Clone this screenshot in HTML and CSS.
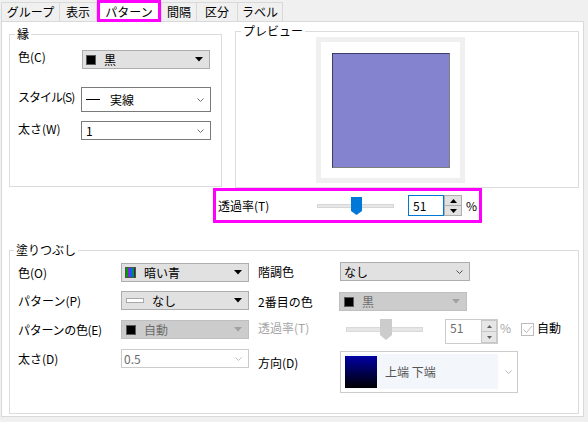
FILE: index.html
```html
<!DOCTYPE html>
<html lang="ja">
<head>
<meta charset="utf-8">
<link rel="stylesheet" href="styles.css">
</head>
<body>
<div class="tabs">
  <div class="tab t1">グループ</div>
  <div class="tab t2">表示</div>
  <div class="tab sel">パターン</div>
  <div class="tab t4">間隔</div>
  <div class="tab t5">区分</div>
  <div class="tab t6">ラベル</div>
</div>
<div class="panel">
  <div class="top">
    <div class="group g-border">
      <span class="legend">縁</span>
      <div class="brow br1">
        <span class="lbl bl1">色(C)</span>
        <div class="cb btn bc1">
          <span class="sq"></span><span class="cbt">黒</span>
          <svg class="tri" width="8" height="5" viewBox="0 0 8 5"><path d="M0 0H8L4 4.5Z" fill="#000"/></svg>
        </div>
      </div>
      <div class="brow br2">
        <span class="lbl bl2">スタイル(S)</span>
        <div class="cb edit bc2">
          <span class="ln"></span><span class="cbt t-style">実線</span>
          <svg class="chev" width="7" height="4" viewBox="0 0 7 4"><path d="M0.5 0.5L3.5 3.5L6.5 0.5" fill="none" stroke="#707070"/></svg>
        </div>
      </div>
      <div class="brow br3">
        <span class="lbl bl3">太さ(W)</span>
        <div class="cb edit bc3">
          <span class="cbt t-one">1</span>
          <svg class="chev" width="7" height="4" viewBox="0 0 7 4"><path d="M0.5 0.5L3.5 3.5L6.5 0.5" fill="none" stroke="#707070"/></svg>
        </div>
      </div>
    </div>
    <div class="group g-preview">
      <span class="legend">プレビュー</span>
      <div class="frame"><div class="swatch"></div></div>
    </div>
  </div>

  <div class="trans">
    <span class="t-label">透過率(T)</span>
    <div class="slider">
      <div class="track"></div>
      <svg class="thumb" width="11" height="18" viewBox="0 0 11 18"><path d="M0 0H11V14L5.5 18L0 14Z" fill="#0078d7"/></svg>
    </div>
    <div class="num focus">51</div>
    <div class="spin">
      <div class="sb"><svg width="7" height="4" viewBox="0 0 7 4"><path d="M3.5 0L7 4H0Z" fill="#000"/></svg></div>
      <div class="sb sb2"><svg width="7" height="4" viewBox="0 0 7 4"><path d="M0 0H7L3.5 4Z" fill="#000"/></svg></div>
    </div>
    <span class="pct">%</span>
  </div>

  <div class="group g-fill">
    <span class="legend lg-fill">塗りつぶし</span>
    <div class="fill-body">
      <div class="fcol left">
        <div class="frow">
          <span class="lbl lw">色(O)</span>
          <div class="cb btn fw">
            <svg class="bars" width="11" height="11" viewBox="0 0 11 11">
              <rect x="0.5" y="0.5" width="10" height="10" fill="#fff" stroke="#505050"/>
              <rect x="1" y="1" width="2" height="9" fill="#00a000"/>
              <rect x="3" y="1" width="2" height="9" fill="#7030d0"/>
              <rect x="5" y="1" width="2" height="9" fill="#2050ff"/>
              <rect x="7" y="1" width="2" height="9" fill="#008a60"/>
              <rect x="9" y="1" width="1" height="9" fill="#303030"/>
            </svg>
            <span class="cbt m8">暗い青</span>
            <svg class="tri" width="8" height="5" viewBox="0 0 8 5"><path d="M0 0H8L4 4.5Z" fill="#000"/></svg>
          </div>
        </div>
        <div class="frow fr2">
          <span class="lbl lw">パターン(P)</span>
          <div class="cb btn fw pat">
            <span class="patbox"></span>
            <span class="cbt m8">なし</span>
            <svg class="tri" width="8" height="5" viewBox="0 0 8 5"><path d="M0 0H8L4 4.5Z" fill="#000"/></svg>
          </div>
        </div>
        <div class="frow fr3">
          <span class="lbl lw tight">パターンの色(E)</span>
          <div class="cb dis fw pat">
            <span class="sq"></span>
            <span class="cbt m8 gray">自動</span>
            <svg class="tri" width="8" height="5" viewBox="0 0 8 5"><path d="M0 0H8L4 4.5Z" fill="#a0a0a0"/></svg>
          </div>
        </div>
        <div class="frow fr3">
          <span class="lbl lw">太さ(D)</span>
          <div class="cb disedit fw">
            <span class="cbt gray t-half">0.5</span>
            <svg class="chev" width="7" height="4" viewBox="0 0 7 4"><path d="M0.5 0.5L3.5 3.5L6.5 0.5" fill="none" stroke="#c0c0c0"/></svg>
          </div>
        </div>
      </div>

      <div class="fcol right">
        <div class="frow">
          <span class="lbl rw1">階調色</span>
          <div class="cb btn gw1">
            <span class="cbt t-grad">なし</span>
            <svg class="chev" width="7" height="4" viewBox="0 0 7 4"><path d="M0.5 0.5L3.5 3.5L6.5 0.5" fill="none" stroke="#505050"/></svg>
          </div>
        </div>
        <div class="frow rr2">
          <span class="lbl rw2">2番目の色</span>
          <div class="cb dis gw2">
            <span class="sq"></span>
            <span class="cbt m8 gray">黒</span>
            <svg class="tri" width="8" height="5" viewBox="0 0 8 5"><path d="M0 0H8L4 4.5Z" fill="#a0a0a0"/></svg>
          </div>
        </div>
        <div class="frow rr3">
          <span class="lbl rw3 light">透過率(T)</span>
          <div class="slider dslider">
            <div class="track dtrack"></div>
            <svg class="thumb dthumb" width="12" height="21" viewBox="0 0 12 21"><path d="M0 0H12V16L6 21L0 16Z" fill="#cccccc"/></svg>
          </div>
          <div class="dnum">
            <span class="dnum-t">51</span>
            <div class="dspin">
              <div class="dsb"><svg width="5" height="3" viewBox="0 0 5 3"><path d="M2.5 0L5 3H0Z" fill="#606060"/></svg></div>
              <div class="dsb dsb2"><svg width="5" height="3" viewBox="0 0 5 3"><path d="M0 0H5L2.5 3Z" fill="#606060"/></svg></div>
            </div>
          </div>
          <span class="dpct light">%</span>
          <span class="chk"><svg width="11" height="11" viewBox="0 0 11 11"><path d="M1.5 5.5L4.5 8.5L10 2" fill="none" stroke="#bcbcbc" stroke-width="1"/></svg></span>
          <span class="auto">自動</span>
        </div>
        <div class="frow rr4">
          <span class="lbl rw1 dir-l">方向(D)</span>
          <div class="dir">
            <div class="dir-in">
              <span class="grad"></span>
              <span class="dir-t">上端 下端</span>
            </div>
            <svg class="chev dir-chev" width="7" height="4" viewBox="0 0 7 4"><path d="M0.5 0.5L3.5 3.5L6.5 0.5" fill="none" stroke="#b8b8b8"/></svg>
          </div>
        </div>
      </div>
    </div>
  </div>
</div>
</body>
</html>
```

FILE: styles.css
```css
* { box-sizing: border-box; }

body {
  margin: 0;
  width: 588px;
  height: 422px;
  overflow: hidden;
  background: #f0f0f0;
  font-family: "Noto Sans CJK JP", "Noto Sans", sans-serif;
  font-size: 12px;
  line-height: 14px;
  color: #000;
}

/* tabs */
.tabs {
  display: flex;
  align-items: flex-end;
  height: 21px;
  padding-left: 1px;
}
.tab {
  flex: none;
  height: 19px;
  padding-top: 2px;
  border: 1px solid #d9d9d9;
  border-bottom: none;
  background: #f0f0f0;
  text-align: center;
  white-space: nowrap;
}
.t1 { width: 59px; }
.t2 { width: 38px; margin-left: -1px; }
.sel {
  position: relative;
  z-index: 1;
  width: 64px;
  height: 22px;
  margin-bottom: -1px;
  border: 3px solid #ff00ff;
  background: #fff;
}
.t4 { width: 36px; }
.t5 { width: 42px; margin-left: -1px; }
.t6 { width: 46px; margin-left: -1px; }

/* panel */
.panel {
  margin-left: 1px;
  width: 583px;
  height: 396px;
  border: 1px solid #d9d9d9;
  background: #fff;
}

.top {
  display: flex;
  align-items: flex-start;
}

.group {
  position: relative;
  border: 1px solid #dcdcdc;
  flex: none;
}
.legend {
  position: absolute;
  top: -8px;
  left: 5px;
  padding: 0 2px;
  background: #fff;
  line-height: 14px;
  white-space: nowrap;
}
.lg-fill { left: 4px; }

.g-border {
  margin: 12px 0 0 7px;
  width: 213px;
  height: 153px;
  padding: 15px 0 0 8px;
}
.g-preview {
  margin: 9px 0 0 13px;
  width: 344px;
  height: 157px;
  padding: 5px 0 0 80px;
}

.lbl { flex: none; white-space: nowrap; }
.tight { letter-spacing: -0.3px; }

/* border group rows */
.brow { display: flex; align-items: flex-start; }
.br1 { height: 19px; }
.br2 { height: 25px; margin-top: 18px; }
.br3 { height: 19px; margin-top: 9px; }
.bl1 { width: 64px; padding-top: 0; }
.bl2 { width: 63px; padding-top: 3px; letter-spacing: -1px; }
.bl3 { width: 63px; padding-top: 1px; }
.bc1 { width: 128px; height: 19px; }
.bc2 { width: 130px; height: 25px; }
.bc3 { width: 130px; height: 19px; }

/* combo boxes */
.cb {
  flex: none;
  display: flex;
  align-items: center;
  white-space: nowrap;
}
.btn {
  background: #e1e1e1;
  border: 1px solid #adadad;
  padding-left: 3px;
}
.edit {
  background: #fff;
  border: 1px solid #7a7a7a;
  padding-left: 4px;
}
.dis {
  background: #cccccc;
  border: 1px solid #bfbfbf;
  padding-left: 4px;
}
.disedit {
  background: #fff;
  border: 1px solid #cccccc;
  padding-left: 2px;
}
.cbt { line-height: 14px; }
.m8 { margin-left: 8px; }
.gray { color: #6d6d6d; }
.light { color: #a6a6a6; }

.sq {
  flex: none;
  width: 10px;
  height: 10px;
  background: #000;
  border: 1px solid #5a5a5a;
}
.sq + .cbt { margin-left: 8px; }
.ln {
  flex: none;
  width: 14px;
  height: 1px;
  background: #000;
}
.t-style { margin-left: 10px; }
.t-one { margin-left: 0; }
.tri { flex: none; margin-left: auto; margin-right: 6px; }
.chev { flex: none; margin-left: auto; margin-right: 6px; }

/* preview */
.frame {
  width: 149px;
  height: 146px;
  border: 5px solid #f0f0f0;
  background: #fff;
  padding: 11px 10px 10px 11px;
}
.swatch {
  width: 118px;
  height: 115px;
  background: #8483cf;
  border: 1px solid;
  border-color: #3c3c66 #7d7d7d #7d7d7d #3c3c66;
}

/* transparency row */
.trans {
  display: flex;
  align-items: center;
  margin-left: 211px;
  width: 269px;
  height: 35px;
  border: 3px solid #ff00ff;
  padding-left: 2px;
}
.t-label { flex: none; width: 99px; }
.slider {
  position: relative;
  flex: none;
  width: 77px;
  height: 19px;
  display: flex;
  align-items: center;
}
.track {
  width: 100%;
  height: 4px;
  background: #e7e7e7;
  border: 1px solid #d6d6d6;
}
.thumb { position: absolute; left: 34px; top: 1px; }
.num {
  flex: none;
  margin-left: 14px;
  width: 36px;
  height: 21px;
  padding: 1px 0 0 4px;
  line-height: 17px;
  background: #fff;
}
.focus { border: 1px solid #0078d7; }
.spin {
  flex: none;
  width: 18px;
  height: 21px;
  display: flex;
  flex-direction: column;
}
.sb {
  height: 11px;
  background: #e1e1e1;
  border: 1px solid #adadad;
  display: flex;
  align-items: center;
  justify-content: center;
}
.sb2 { margin-top: -1px; }
.pct { margin-left: 4px; }

/* fill group */
.g-fill {
  margin: 27px 0 0 7px;
  width: 570px;
  height: 164px;
}
.fill-body {
  display: flex;
  padding-left: 8px;
}
.fcol { flex: none; }
.left { width: 240px; padding-top: 12px; }
.right { padding-top: 11px; }

.frow { display: flex; align-items: center; height: 19px; }
.fr2 { margin-top: 9px; }
.fr3 { margin-top: 10px; }
.lw { width: 103px; }
.fw { width: 128px; height: 19px; }
.pat { padding-left: 4px; }
.patbox {
  flex: none;
  width: 18px;
  height: 5px;
  background: #fff;
  border: 1px solid #a8a8a8;
}
.bars { flex: none; }
.t-half { margin-left: 0; }

.rw1 { width: 82px; }
.rw2 { width: 81px; }
.rw3 { width: 88px; }
.gw1 { width: 130px; height: 19px; }
.gw2 { width: 128px; height: 19px; }
.t-grad { margin-left: 0; }
.rr2 { margin-top: 11px; }
.rr3 { margin-top: 8px; height: 25px; align-items: flex-start; }
.rr3 .rw3 { padding-top: 2px; }
.dslider { height: 21px; }
.dtrack { height: 5px; background: #e6e6e6; border-color: #d9d9d9; }
.dthumb { top: 0; }
.dnum {
  flex: none;
  display: flex;
  align-items: flex-start;
  margin-left: 22px;
  width: 53px;
  height: 25px;
  border: 1px solid #cccccc;
  background: #fff;
}
.dnum-t { flex: 1; padding: 1px 0 0 4px; color: #6d6d6d; }
.dspin {
  flex: none;
  width: 16px;
  height: 23px;
  display: flex;
  flex-direction: column;
}
.dsb {
  height: 12px;
  background: #e6e6e6;
  border: 1px solid #c8c8c8;
  display: flex;
  align-items: center;
  justify-content: center;
}
.dsb2 { margin-top: -1px; }
.dpct { margin-left: 2px; padding-top: 2px; }
.chk {
  flex: none;
  margin: 4px 0 0 10px;
  width: 13px;
  height: 13px;
  border: 1px solid #bcbcbc;
  background: #fff;
  display: flex;
  align-items: center;
  justify-content: center;
}
.auto { margin-left: 3px; padding-top: 2px; }

.rr4 { margin-top: 7px; height: 42px; align-items: flex-start; }
.dir-l { padding-top: 5px; }
.dir {
  flex: none;
  display: flex;
  align-items: center;
  width: 178px;
  height: 42px;
  border: 1px solid #cccccc;
  padding: 2px 0 3px 4px;
  background: #fff;
}
.dir-in {
  flex: none;
  display: flex;
  align-items: center;
  width: 153px;
  height: 35px;
  background: #f3f6fb;
}
.grad {
  flex: none;
  width: 32px;
  height: 32px;
  background: linear-gradient(#0000a4, #000000);
}
.dir-t { margin-left: 8px; color: #555; }
.dir-chev { margin-right: 5px; }
```
